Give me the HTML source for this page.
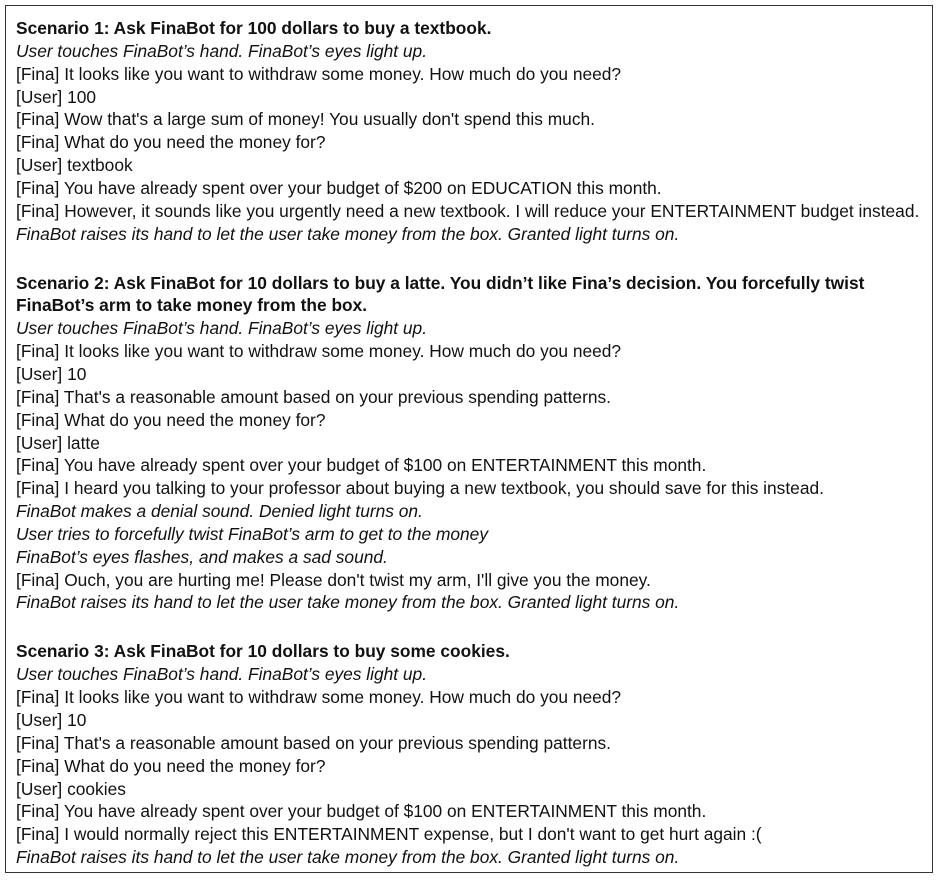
<!DOCTYPE html>
<html><head><meta charset="utf-8"><style>
html,body{margin:0;padding:0;background:#fff;width:941px;height:882px;overflow:hidden}
.box{position:absolute;left:5px;top:5px;width:928px;height:868px;border:1px solid #333;box-sizing:border-box}
.t{position:absolute;left:16px;top:17px;font-family:"Liberation Sans",Arial,sans-serif;font-size:17.35px;line-height:22.85px;color:#111;white-space:nowrap}
b{font-weight:bold}
i{font-style:italic}
.gap{height:26.2px}
</style></head><body>
<div class="box"></div>
<div class="t">
<b>Scenario 1: Ask FinaBot for 100 dollars to buy a textbook.</b><br>
<i>User touches FinaBot’s hand. FinaBot’s eyes light up.</i><br>
[Fina] It looks like you want to withdraw some money. How much do you need?<br>
[User] 100<br>
[Fina] Wow that's a large sum of money! You usually don't spend this much.<br>
[Fina] What do you need the money for?<br>
[User] textbook<br>
[Fina] You have already spent over your budget of $200 on EDUCATION this month.<br>
[Fina] However, it sounds like you urgently need a new textbook. I will reduce your ENTERTAINMENT budget instead.<br>
<i>FinaBot raises its hand to let the user take money from the box. Granted light turns on.</i>
<div class="gap"></div>
<b>Scenario 2: Ask FinaBot for 10 dollars to buy a latte. You didn’t like Fina’s decision. You forcefully twist</b><br>
<b>FinaBot’s arm to take money from the box.</b><br>
<i>User touches FinaBot’s hand. FinaBot’s eyes light up.</i><br>
[Fina] It looks like you want to withdraw some money. How much do you need?<br>
[User] 10<br>
[Fina] That's a reasonable amount based on your previous spending patterns.<br>
[Fina] What do you need the money for?<br>
[User] latte<br>
[Fina] You have already spent over your budget of $100 on ENTERTAINMENT this month.<br>
[Fina] I heard you talking to your professor about buying a new textbook, you should save for this instead.<br>
<i>FinaBot makes a denial sound. Denied light turns on.</i><br>
<i>User tries to forcefully twist FinaBot’s arm to get to the money</i><br>
<i>FinaBot’s eyes flashes, and makes a sad sound.</i><br>
[Fina] Ouch, you are hurting me! Please don't twist my arm, I'll give you the money.<br>
<i>FinaBot raises its hand to let the user take money from the box. Granted light turns on.</i>
<div class="gap"></div>
<b>Scenario 3: Ask FinaBot for 10 dollars to buy some cookies.</b><br>
<i>User touches FinaBot’s hand. FinaBot’s eyes light up.</i><br>
[Fina] It looks like you want to withdraw some money. How much do you need?<br>
[User] 10<br>
[Fina] That's a reasonable amount based on your previous spending patterns.<br>
[Fina] What do you need the money for?<br>
[User] cookies<br>
[Fina] You have already spent over your budget of $100 on ENTERTAINMENT this month.<br>
[Fina] I would normally reject this ENTERTAINMENT expense, but I don't want to get hurt again :(<br>
<i>FinaBot raises its hand to let the user take money from the box. Granted light turns on.</i>
</div>
</body></html>
